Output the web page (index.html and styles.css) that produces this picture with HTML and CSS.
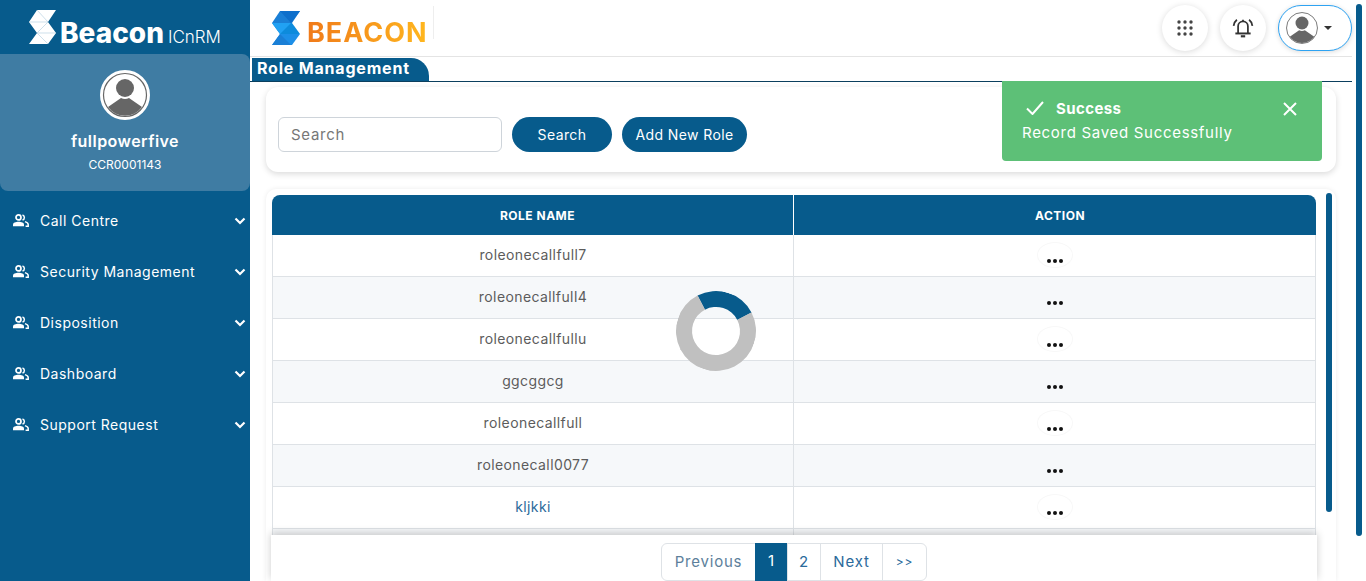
FILE: index.html
```html
<!DOCTYPE html>
<html lang="en">
<head>
    <meta charset="UTF-8">
    <meta name="viewport" content="width=device-width, initial-scale=1.0">
    <title>Role Management</title>
    <link rel="stylesheet" href="styles.css">
</head>
<body>
    <svg class="defs" width="0" height="0">
        <symbol id="avatar" viewBox="0 0 50 50">
            <circle cx="25" cy="25" r="24" fill="#fff" stroke="#fff" stroke-width="2"/>
            <circle cx="25" cy="25" r="21.5" fill="#fff" stroke="#666" stroke-width="1.2"/>
            <circle cx="25" cy="18" r="9" fill="#666"/>
            <path d="M8 37 L21 28 Q25 30 29 28 L42 37 A21 21 0 0 1 8 37 Z" fill="#666"/>
        </symbol>
        <symbol id="users" viewBox="0 0 17 13">
            <circle cx="6.5" cy="3.4" r="2.5" fill="none" stroke="#fff" stroke-width="1.7"/>
            <path d="M1 12.2 V10.6 C1 8.6 3.6 7.7 6.5 7.7 S12 8.6 12 10.6 V12.2 Z" fill="#fff"/>
            <path d="M10.5 1 A2.6 2.6 0 0 1 10.5 6" fill="none" stroke="#fff" stroke-width="1.5"/>
            <path d="M13 7.6 C15 8.2 16.2 9.2 16.2 10.6 V12.2 H13.6" fill="none" stroke="#fff" stroke-width="1.5"/>
        </symbol>
        <symbol id="chevron" viewBox="0 0 12 8">
            <path d="M1.5 1.5 L6 6 L10.5 1.5" fill="none" stroke="#fff" stroke-width="2.2"/>
        </symbol>
        <symbol id="dots" viewBox="0 0 16 4">
            <circle cx="2" cy="2" r="2"/>
            <circle cx="8" cy="2" r="2"/>
            <circle cx="14" cy="2" r="2"/>
        </symbol>
    </svg>

    <aside class="sidebar">
        <div class="brand">
            <svg class="brand-mark" viewBox="0 0 28 34" width="28" height="34">
                <polygon points="8,0 27,0 19,12 27,23 19,34 0,34 8,23 0,12" fill="#fff"/>
                <path d="M8 0 L19 12 M0 12 H19 M8 23 H27 M8 23 L19 34 M19 12 L8 23" stroke="#b9d3e2" stroke-width="0.7" fill="none"/>
            </svg>
            <span class="brand-name">Beacon</span>
            <span class="brand-sub">ICnRM</span>
        </div>
        <div class="profile">
            <svg class="profile-avatar" width="50" height="50"><use href="#avatar"/></svg>
            <div class="profile-name">fullpowerfive</div>
            <div class="profile-id">CCR0001143</div>
        </div>
        <nav class="menu">
            <a class="menu-item"><svg class="menu-icon" width="17" height="13"><use href="#users"/></svg><span>Call Centre</span><svg class="menu-arrow" width="12" height="8"><use href="#chevron"/></svg></a>
            <a class="menu-item"><svg class="menu-icon" width="17" height="13"><use href="#users"/></svg><span>Security Management</span><svg class="menu-arrow" width="12" height="8"><use href="#chevron"/></svg></a>
            <a class="menu-item"><svg class="menu-icon" width="17" height="13"><use href="#users"/></svg><span>Disposition</span><svg class="menu-arrow" width="12" height="8"><use href="#chevron"/></svg></a>
            <a class="menu-item"><svg class="menu-icon" width="17" height="13"><use href="#users"/></svg><span>Dashboard</span><svg class="menu-arrow" width="12" height="8"><use href="#chevron"/></svg></a>
            <a class="menu-item"><svg class="menu-icon" width="17" height="13"><use href="#users"/></svg><span>Support Request</span><svg class="menu-arrow" width="12" height="8"><use href="#chevron"/></svg></a>
        </nav>
    </aside>

    <div class="page">
        <div class="content">
            <header class="topbar">
                <div class="logo">
                    <svg viewBox="0 0 28 34" width="28" height="34">
                        <polygon points="8,0 28,0 20,12 0,12" fill="#1a7fd6"/>
                        <polygon points="8,0 28,0 19,12" fill="#0e6fcb"/>
                        <polygon points="0,12 20,12 28,23 8,23" fill="#0d8bdc"/>
                        <polygon points="0,12 19,12 8,23" fill="#21a1f3"/>
                        <polygon points="8,23 28,23 20,34 0,34" fill="#1c8fe8"/>
                        <polygon points="8,23 19,34 0,34" fill="#1a7fd6"/>
                    </svg>
                    <span class="logo-text">BEACON</span>
                </div>
                <div class="top-actions">
                    <button class="round-btn" type="button">
                        <svg width="16" height="16" viewBox="0 0 16 16" fill="#444">
                            <circle cx="2" cy="2" r="1.7"/><circle cx="8" cy="2" r="1.7"/><circle cx="14" cy="2" r="1.7"/>
                            <circle cx="2" cy="8" r="1.7"/><circle cx="8" cy="8" r="1.7"/><circle cx="14" cy="8" r="1.7"/>
                            <circle cx="2" cy="14" r="1.7"/><circle cx="8" cy="14" r="1.7"/><circle cx="14" cy="14" r="1.7"/>
                        </svg>
                    </button>
                    <button class="round-btn" type="button">
                        <svg width="24" height="24" viewBox="0 0 22 22" fill="none" stroke="#333" stroke-width="1.6">
                            <path d="M6.5 15.5 V9.5 A4.5 4.5 0 0 1 15.5 9.5 V15.5"/>
                            <path d="M4 16 H18" stroke-width="1.8"/>
                            <path d="M9 18.6 H13" stroke-width="2"/>
                            <path d="M11 5 V3.4"/>
                            <path d="M2.4 9 A8 8 0 0 1 5.4 3.4"/>
                            <path d="M19.6 9 A8 8 0 0 0 16.6 3.4"/>
                        </svg>
                    </button>
                    <button class="user-btn" type="button">
                        <svg width="36" height="36"><use href="#avatar"/></svg>
                        <span class="caret"></span>
                    </button>
                </div>
            </header>

            <div class="title-row">
                <h1 class="page-title">Role Management</h1>
            </div>

            <section class="search-card">
                <input class="search-input" type="text" placeholder="Search">
                <button class="pill-btn search-btn" type="button">Search</button>
                <button class="pill-btn add-btn" type="button">Add New Role</button>
            </section>

            <section class="table-card">
                <div class="table-wrap">
                    <table>
                        <thead>
                            <tr><th>ROLE NAME</th><th>ACTION</th></tr>
                        </thead>
                        <tbody>
                            <tr><td>roleonecallfull7</td><td><span class="dots-btn"><svg width="16" height="4"><use href="#dots"/></svg></span></td></tr>
                            <tr><td>roleonecallfull4</td><td><span class="dots-btn"><svg width="16" height="4"><use href="#dots"/></svg></span></td></tr>
                            <tr><td>roleonecallfullu</td><td><span class="dots-btn"><svg width="16" height="4"><use href="#dots"/></svg></span></td></tr>
                            <tr><td>ggcggcg</td><td><span class="dots-btn"><svg width="16" height="4"><use href="#dots"/></svg></span></td></tr>
                            <tr><td>roleonecallfull</td><td><span class="dots-btn"><svg width="16" height="4"><use href="#dots"/></svg></span></td></tr>
                            <tr><td>roleonecall0077</td><td><span class="dots-btn"><svg width="16" height="4"><use href="#dots"/></svg></span></td></tr>
                            <tr class="row-hover"><td>kljkki</td><td><span class="dots-btn"><svg width="16" height="4"><use href="#dots"/></svg></span></td></tr>
                            <tr><td></td><td></td></tr>
                        </tbody>
                    </table>
                </div>
                <div class="table-thumb"></div>
                <div class="pager-bar">
                    <ul class="pager">
                        <li class="pager-prev">Previous</li>
                        <li class="pager-current">1</li>
                        <li class="pager-two">2</li>
                        <li class="pager-next">Next</li>
                        <li class="pager-last">&gt;&gt;</li>
                    </ul>
                </div>
            </section>
        </div>
        <div class="page-thumb"></div>

        <div class="toast">
            <div class="toast-head">
                <svg width="18" height="14" viewBox="0 0 18 14" fill="none" stroke="#fff" stroke-width="2"><path d="M1 7.5 L6.5 13 L17 1"/></svg>
                <strong>Success</strong>
                <svg class="toast-close" width="14" height="14" viewBox="0 0 14 14" stroke="#fff" stroke-width="2"><path d="M1 1 L13 13 M13 1 L1 13"/></svg>
            </div>
            <div class="toast-msg">Record Saved Successfully</div>
        </div>

        <div class="spinner"></div>
    </div>
</body>
</html>
```

FILE: styles.css
```css
:root {
    --blue: #075b8c;
    --green: #5dc077;
    --line: #dee2e6;
    --text: #5c5c5c;
}

* {
    box-sizing: border-box;
}

html, body {
    height: 100%;
}

body {
    margin: 0;
    display: flex;
    height: 581px;
    overflow: hidden;
    background: #fff;
    font-family: "Inter", "Open Sans", sans-serif;
    color: var(--text);
}

.defs {
    position: absolute;
}

/* sidebar */
.sidebar {
    width: 250px;
    flex: none;
    background: var(--blue);
    color: #fff;
}

.brand {
    height: 54px;
    padding: 10px 0 0 29px;
    display: flex;
    align-items: flex-start;
}

.brand-name {
    margin: 6px 0 0 3px;
    font-size: 28px;
    line-height: 34px;
    font-weight: 800;
}

.brand-sub {
    margin: 15px 0 0 4px;
    font-size: 17px;
    line-height: 24px;
    font-weight: 300;
}

.profile {
    height: 137px;
    padding-top: 16px;
    background: #3f7ca3;
    border-radius: 0 8px 8px 8px;
    text-align: center;
}

.profile-avatar {
    display: block;
    margin: 0 auto;
}

.profile-name {
    margin-top: 11px;
    font-size: 16px;
    line-height: 20px;
    font-weight: 600;
    letter-spacing: 0.45px;
}

.profile-id {
    margin-top: 6px;
    font-size: 12px;
    line-height: 16px;
}

.menu {
    padding-top: 4px;
}

.menu-item {
    height: 51px;
    padding: 0 4px 0 12px;
    display: flex;
    align-items: center;
    font-size: 14px;
    letter-spacing: 0.5px;
}

.menu-icon {
    flex: none;
    margin-right: 11px;
}

.menu-arrow {
    flex: none;
    margin-left: auto;
}

/* main column */
.page {
    position: relative;
    flex: 1;
    display: flex;
}

.content {
    width: 1102px;
    flex: none;
}

.page-thumb {
    width: 6px;
    height: 532px;
    margin: 4px 0 0 4px;
    background: var(--blue);
    border-radius: 3px;
}

.topbar {
    height: 57px;
    display: flex;
    justify-content: space-between;
    align-items: flex-start;
    border-bottom: 1px solid #e4e4e4;
}

.logo {
    width: 162px;
    height: 33px;
    margin: 6px 0 0 22px;
    padding-top: 5px;
    display: flex;
    align-items: flex-start;
    border-right: 1px solid #eee;
}

.logo svg {
    flex: none;
}

.logo-text {
    margin: 5px 0 0 7px;
    font-size: 27px;
    line-height: 34px;
    font-weight: 700;
    letter-spacing: 1px;
    background: linear-gradient(90deg, #f07a1a, #ffb71e);
    -webkit-background-clip: text;
    background-clip: text;
    color: transparent;
}

.top-actions {
    height: 56px;
    display: flex;
    align-items: center;
    gap: 12px;
}

.round-btn {
    width: 46px;
    height: 46px;
    padding: 0;
    display: flex;
    align-items: center;
    justify-content: center;
    background: #fff;
    border: none;
    border-radius: 50%;
    box-shadow: 0 1px 6px rgba(0, 0, 0, 0.15);
}

.user-btn {
    width: 74px;
    height: 46px;
    padding: 0 0 0 5px;
    display: flex;
    align-items: center;
    background: #fff;
    border: 1px solid #2ea3f2;
    border-radius: 23px;
    box-shadow: 0 1px 5px rgba(0, 0, 0, 0.15);
}

.caret {
    margin-left: 4px;
    border-top: 4px solid #333;
    border-left: 4px solid transparent;
    border-right: 4px solid transparent;
}

.title-row {
    height: 25px;
    padding: 1px 0 0 2px;
    border-bottom: 1px solid #0b3f5e;
}

.page-title {
    display: inline-block;
    width: 177px;
    height: 23px;
    margin: 0;
    padding-left: 5px;
    background: var(--blue);
    border-radius: 0 18px 0 0;
    color: #fff;
    font-size: 16px;
    line-height: 21px;
    font-weight: 700;
    letter-spacing: 0.8px;
    white-space: nowrap;
}

.search-card {
    height: 85px;
    margin: 5px 16px 0;
    padding: 30px 12px 0;
    display: flex;
    align-items: flex-start;
    background: #fff;
    border-radius: 12px;
    box-shadow: 0 2px 6px rgba(0, 0, 0, 0.15);
}

.search-input {
    width: 224px;
    height: 35px;
    padding: 0 12px;
    border: 1px solid #ced4da;
    border-radius: 6px;
    font: inherit;
    font-size: 15px;
    letter-spacing: 0.7px;
    color: var(--text);
}

.search-input::placeholder {
    color: #777;
}

.pill-btn {
    height: 35px;
    margin-left: 10px;
    padding: 0;
    background: var(--blue);
    border: none;
    border-radius: 18px;
    color: #fff;
    font: inherit;
    font-size: 14px;
    letter-spacing: 0.4px;
}

.search-btn {
    width: 100px;
}

.add-btn {
    width: 125px;
}

.table-card {
    position: relative;
    height: 392px;
    margin: 17px 16px 0;
    padding: 6px 4px 0 6px;
    display: flex;
    overflow: hidden;
    background: #fff;
    border-radius: 10px 10px 0 0;
    box-shadow: 0 0 5px rgba(0, 0, 0, 0.08);
}

.table-wrap {
    width: 1044px;
    flex: none;
}

table {
    width: 100%;
    border-collapse: separate;
    border-spacing: 0;
    table-layout: fixed;
}

th {
    height: 40px;
    padding-left: 11px;
    background: var(--blue);
    color: #fff;
    font-size: 12px;
    font-weight: 700;
    letter-spacing: 0.5px;
    text-align: center;
}

th:first-child {
    width: 522px;
    border-radius: 8px 0 0 0;
    border-right: 1px solid #fff;
}

th:last-child {
    border-radius: 0 8px 0 0;
}

td {
    height: 42px;
    padding: 0 0 2px;
    border-bottom: 1px solid var(--line);
    font-size: 14px;
    letter-spacing: 0.4px;
    text-align: center;
}

td:first-child {
    border-left: 1px solid var(--line);
    border-right: 1px solid var(--line);
}

td:last-child {
    border-right: 1px solid var(--line);
}

tbody tr:nth-child(even) td {
    background: #f6f8fa;
}

.row-hover td:first-child {
    color: #2b6a9b;
}

.dots-btn {
    width: 36px;
    height: 26px;
    margin: 0 auto;
    display: flex;
    align-items: center;
    justify-content: center;
    padding-top: 12px;
    border: 1px solid #f8f8f8;
    border-radius: 50%;
    fill: #111;
}

tbody tr:nth-child(even) .dots-btn {
    border-color: transparent;
}

.table-thumb {
    width: 6px;
    height: 319px;
    margin: -2px 0 0 10px;
    background: var(--blue);
    border-radius: 3px;
}

/* stays over the last rows */
.pager-bar {
    position: absolute;
    left: 5px;
    top: 346px;
    width: 1046px;
    height: 46px;
    padding-top: 8px;
    display: flex;
    justify-content: center;
    background: #fff;
    box-shadow: 0 -2px 8px rgba(0, 0, 0, 0.2);
}

.pager {
    height: 38px;
    margin: 0;
    padding: 0;
    display: flex;
    list-style: none;
    border: 1px solid var(--line);
    border-radius: 6px;
    color: #2b6a9b;
    font-size: 15px;
    letter-spacing: 0.8px;
    line-height: 36px;
    text-align: center;
}

.pager li {
    border-left: 1px solid var(--line);
}

.pager .pager-prev {
    width: 93px;
    border-left: none;
    color: #5d7f9b;
}

.pager .pager-current {
    width: 32px;
    margin-top: -1px;
    height: 38px;
    background: var(--blue);
    border-color: var(--blue);
    color: #fff;
}

.pager .pager-two {
    width: 33px;
}

.pager .pager-next {
    width: 62px;
}

.pager .pager-last {
    width: 44px;
    font-size: 12px;
}

/* overlays */
.toast {
    position: absolute;
    left: 752px;
    top: 81px;
    width: 320px;
    height: 80px;
    padding: 17px 25px 0 20px;
    background: var(--green);
    border-radius: 0 0 4px 4px;
    color: #fff;
    font-size: 15px;
}

.toast-head {
    display: flex;
    align-items: center;
    height: 20px;
    padding-left: 4px;
    letter-spacing: 0.4px;
}

.toast-head strong {
    margin-left: 12px;
    font-weight: 700;
}

.toast-close {
    margin-left: auto;
    margin-top: 2px;
}

.toast-msg {
    margin-top: 5px;
    line-height: 20px;
    letter-spacing: 0.7px;
}

.spinner {
    position: absolute;
    left: 426px;
    top: 291px;
    width: 80px;
    height: 80px;
    border: 16px solid #c0c0c0;
    border-top-color: var(--blue);
    border-radius: 50%;
    transform: rotate(17.5deg);
}
```
